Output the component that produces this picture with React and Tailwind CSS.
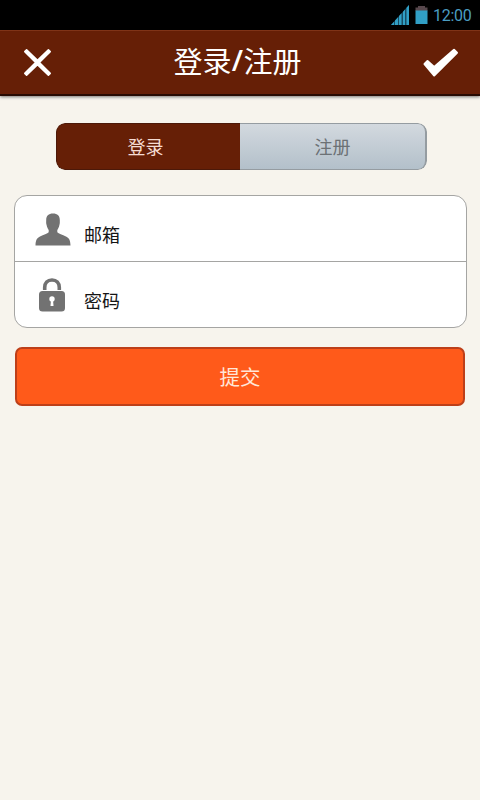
import React from "react";

function StatusBar() {
  return (
    <div className="flex h-[30px] items-center justify-end bg-black pr-[9px]">
      <svg className="mr-[6px] h-[20px] w-[18px]" viewBox="0 0 18 20">
        <path d="M0 20L18 0V20Z" fill="#174c63" />
        <path d="M0 20L3 16.7V20ZM4 20V15.6L7 12.2V20ZM8 20V11.1L10.5 8.3V20ZM12 20V6.7L14 4.4V20ZM15.5 20V2.8L18 0V20Z" fill="#319fc5" />
      </svg>
      <svg className="mr-[5px] h-[18px] w-[13px]" viewBox="0 0 13 18">
        <path d="M3 0H10V1.5H12.5V5H0.5V1.5H3Z" fill="#57484d" />
        <rect x="0.5" y="4.5" width="12" height="13.5" fill="#319fc5" />
      </svg>
      <span className="mt-[2px] w-[38px] whitespace-nowrap font-['Roboto',sans-serif] text-[16px] leading-[30px] tracking-[-0.3px] text-[#4b9dc2]">12:00</span>
    </div>
  );
}

function Header() {
  return (
    <header className="flex h-[66px] items-center justify-between border-t border-b-2 border-t-[#7f3317] border-b-[#280b02] bg-[#661f06] pr-[21px] pl-[23px] shadow-[0_1px_3px_rgba(0,0,0,0.5)]">
      <svg className="h-[29px] w-[29px]" viewBox="0 0 29 29" fill="#fff" stroke="#fff" strokeWidth="1.6" strokeLinejoin="round">
        <path d="M3.6 1.8L14.5 12.4L25.4 1.8L27.2 3.6L16.4 14.5L27.2 25.4L25.4 27.2L14.5 16.6L3.6 27.2L1.8 25.4L12.6 14.5L1.8 3.6Z" />
      </svg>
      <h1 className="mb-[6px] flex text-[29px] leading-[40px] font-normal text-white">
        <span>登录</span>
        <span className="w-[12px] text-center font-['Open_Sans',sans-serif] font-semibold">/</span>
        <span>注册</span>
      </h1>
      <svg className="h-[30px] w-[36px]" viewBox="0 0 36 30" fill="#fff" stroke="#fff" strokeWidth="2" strokeLinejoin="round">
        <path d="M1.5 16L4.5 13L11.2 19L31 1.8L34 4.8L11.2 27.5Z" />
      </svg>
    </header>
  );
}

function Tabs() {
  return (
    <div className="mx-auto mt-[27px] ml-[56px] flex h-[47px] w-[371px] overflow-hidden rounded-[9px] text-[18px]">
      <button className="flex w-[184px] items-center justify-center rounded-l-[9px] border border-r-0 border-[#4c1909] bg-[#661f06] pr-[6px] pb-[1px] text-[#f5dcd3]">登录</button>
      <button className="flex flex-1 items-center justify-center rounded-r-[9px] border-y border-r-2 border-[#959ca1] bg-linear-to-b from-[#d3d9df] to-[#b3c0ca] pb-[1px] text-[#6c7175]">注册</button>
    </div>
  );
}

function Field({ icon, label }) {
  return (
    <div className="flex flex-1 items-center pl-[20px]">
      <span className="mt-[1px] flex w-[36px] justify-center">{icon}</span>
      <span className="mt-[11px] ml-[13px] text-[18px] leading-[26px] text-[#151515]">{label}</span>
    </div>
  );
}

function UserIcon() {
  return (
    <svg className="h-[33px] w-[36px]" viewBox="0 0 36 33" fill="#727272">
      <path d="M18 0.5C13.5 0.5 11.2 2.8 11.2 7C11.2 9.2 11 10 11.6 12C12 14.2 12.8 15.8 13.7 17V19.2C12.5 20.8 8.5 21.8 5 23.4C1.5 25 0.7 27.5 0.5 32.5H35.5C35.3 27.5 34.5 25 31 23.4C27.5 21.8 23.5 20.8 22.3 19.2V17C23.2 15.8 24 14.2 24.4 12C25 10 24.8 9.2 24.8 7C24.8 2.8 22.5 0.5 18 0.5Z" />
    </svg>
  );
}

function LockIcon() {
  return (
    <svg className="mr-[3px] h-[34px] w-[26px]" viewBox="0 0 26 34">
      <path d="M5.7 12V9.5C5.7 4.8 8.5 2 13 2S20.3 4.8 20.3 9.5V12" fill="none" stroke="#727272" strokeWidth="3.6" />
      <rect x="0" y="13" width="26" height="20.5" rx="3.5" fill="#727272" />
      <circle cx="13" cy="21" r="2.7" fill="#fff" />
      <path d="M12 21.5H14L14.5 28H11.5Z" fill="#fff" />
    </svg>
  );
}

export default function App() {
  return (
    <div className="h-[800px] w-[480px] overflow-hidden bg-[#f7f4ed] font-['Noto_Sans_CJK_SC',sans-serif]">
      <StatusBar />
      <Header />
      <Tabs />
      <div className="mt-[25px] ml-[14px] flex h-[133px] w-[453px] flex-col divide-y-[1.5px] divide-[#a5a5a3] rounded-[13px] border-[1.5px] border-[#a5a5a3] bg-white">
        <Field icon={<UserIcon />} label="邮箱" />
        <Field icon={<LockIcon />} label="密码" />
      </div>
      <button className="mt-[19px] ml-[15px] flex h-[59px] w-[450px] items-center justify-center rounded-[7px] border-2 border-[#bd3f19] bg-[#ff5a1a] text-[20.5px] text-[#ffe6d8]">提交</button>
    </div>
  );
}
